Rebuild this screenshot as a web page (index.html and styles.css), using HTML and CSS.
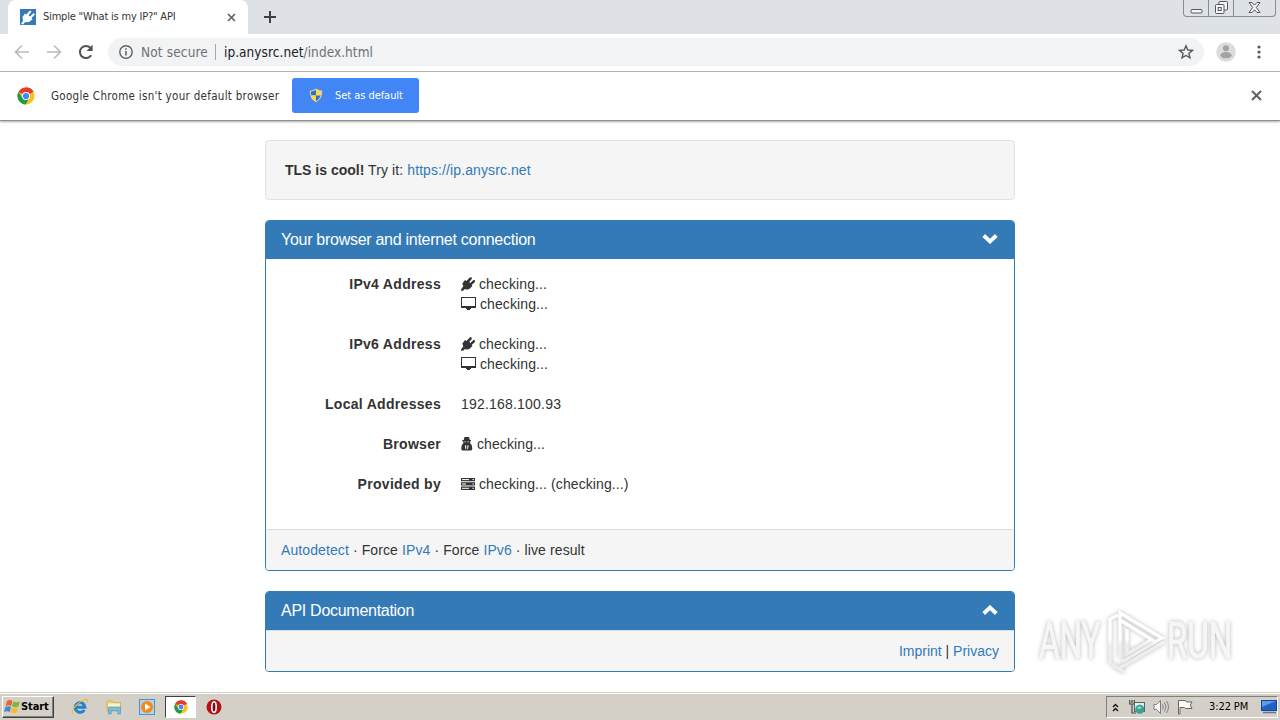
FILE: index.html
```html
<!DOCTYPE html>
<html lang="en">
<head>
  <meta charset="UTF-8">
  <meta name="viewport" content="width=device-width, initial-scale=1.0">
  <title>Simple "What is my IP?" API</title>
  <link rel="stylesheet" href="styles.css">
</head>
<body>
  <!-- shared icons -->
  <svg class="defs" width="0" height="0">
    <symbol id="plug" viewBox="0 0 14 14">
      <path d="M0 14 L.5 11.5 L2.3 9.5 L1.4 6.5 L4 3 L5.4 4 L9 .3 Q11 -.3 10.9 1.7 L8.2 5 L9.4 6 L12.5 3 Q14.6 2.8 13.9 5 L10.6 8 L11.5 9 L8 12.2 L4.8 12.5 L3.7 12 L2.5 13.4 Z"/>
    </symbol>
    <symbol id="monitor" viewBox="0 0 15 14">
      <path fill-rule="evenodd" d="M0 0H15V11H10V12H9V13H6V12H5V11H0Z M1 1V9H14V1Z"/>
    </symbol>
    <symbol id="chrome" viewBox="0 0 18 18">
      <circle cx="9" cy="9" r="8.5" fill="#fbc116"/>
      <path d="M9 9 L1.6 4.7 A8.5 8.5 0 0 1 16.4 4.7 Z" fill="#e33b2e"/>
      <path d="M1.6 4.7 A8.5 8.5 0 0 0 8.6 17.5 L12.4 10.9 L9 9 L5.5 11 Z" fill="#1e9a50"/>
      <path d="M9 5 H16.5 L16.4 4.7 A8.5 8.5 0 0 0 9 .5 Z" fill="#e33b2e"/>
      <circle cx="9" cy="9" r="4" fill="#fff"/>
      <circle cx="9" cy="9" r="3.1" fill="#4285f4"/>
    </symbol>
  </svg>

  <div class="tabstrip">
    <div class="tab">
      <svg class="favicon" width="16" height="16" viewBox="0 0 16 16">
        <rect width="16" height="16" fill="#337ab7"/>
        <path fill="#fff" d="M1 15 L3 12 L2.5 8 L5 4.5 L6.3 5.6 L10 1.5 L11.5 2.5 L8.6 6.3 L10 7.4 L13.5 4 L15 5.5 L11.5 9 L12.5 10.2 L9 13 L5 13.2 L3 15.5Z"/>
      </svg>
      <span class="tab-title">Simple "What is my IP?" API</span>
      <svg class="tab-close" width="9" height="9" viewBox="0 0 9 9"><path d="M1 1L8 8M8 1L1 8" stroke="#5f6368" stroke-width="1.7"/></svg>
    </div>
    <svg class="new-tab" width="12" height="12" viewBox="0 0 12 12"><path d="M6 0V12M0 6H12" stroke="#3c4043" stroke-width="2"/></svg>
    <div class="window-buttons">
      <span class="win-btn"><svg width="13" height="6" viewBox="0 0 13 6"><rect x="1" y="1.5" width="11" height="3.5" rx="1" fill="#f4f5f8" stroke="#53565f"/></svg></span>
      <span class="win-btn"><svg width="13" height="13" viewBox="0 0 13 13" fill="#f4f5f8" stroke="#53565f"><rect x="4" y=".5" width="8.5" height="8.5" rx="1"/><rect x=".5" y="3.5" width="8.5" height="9" rx="1"/><rect x="3.2" y="6.5" width="3" height="3"/></svg></span>
      <span class="win-btn wide"><svg width="13" height="11" viewBox="0 0 13 11"><path d="M1 .5H4L6.5 3.2L9 .5H12L8.3 5.5L12 10.5H9L6.5 7.8L4 10.5H1L4.7 5.5Z" fill="#f4f5f8" stroke="#53565f"/></svg></span>
    </div>
  </div>

  <div class="toolbar">
    <svg class="nav" width="16" height="16" viewBox="0 0 16 16"><path d="M15 8H2M8 1.5L1.5 8L8 14.5" fill="none" stroke="#b9bbbe" stroke-width="1.7"/></svg>
    <svg class="nav" width="16" height="16" viewBox="0 0 16 16"><path d="M1 8H14M8 1.5L14.5 8L8 14.5" fill="none" stroke="#b9bbbe" stroke-width="1.7"/></svg>
    <svg class="nav" width="16" height="16" viewBox="0 0 16 16"><path d="M13.2 11.3A6.1 6.1 0 1 1 12.5 3.8" fill="none" stroke="#505357" stroke-width="2"/><path d="M14.7 .8V7H8.5Z" fill="#505357"/></svg>
    <div class="omnibox">
      <svg width="14" height="14" viewBox="0 0 14 14"><circle cx="7" cy="7" r="6.2" fill="none" stroke="#5f6368" stroke-width="1.4"/><path d="M7 6V10.5M7 3.2V4.8" stroke="#5f6368" stroke-width="1.6"/></svg>
      <span class="not-secure">Not secure</span>
      <span class="omni-sep"></span>
      <span class="url"><b>ip.anysrc.net</b>/index.html</span>
      <svg class="star" width="16" height="16" viewBox="0 0 16 16"><path d="M8 1.8L9.8 6L14.4 6.4L10.9 9.4L12 13.9L8 11.5L4 13.9L5.1 9.4L1.6 6.4L6.2 6Z" fill="none" stroke="#55595e" stroke-width="1.4"/></svg>
    </div>
    <svg class="avatar" width="20" height="20" viewBox="0 0 20 20"><circle cx="10" cy="10" r="9.8" fill="#dcdcdc"/><circle cx="10" cy="6.3" r="3" fill="#a3a3a3"/><ellipse cx="10" cy="13.2" rx="5.6" ry="3.1" fill="#a3a3a3"/></svg>
    <svg class="menu" width="4" height="14" viewBox="0 0 4 14" fill="#55595e"><circle cx="2" cy="2" r="1.6"/><circle cx="2" cy="7" r="1.6"/><circle cx="2" cy="12" r="1.6"/></svg>
  </div>

  <div class="infobar">
    <svg width="18" height="18"><use href="#chrome"/></svg>
    <span class="info-text">Google Chrome isn't your default browser</span>
    <div class="default-btn">
      <svg width="14" height="15" viewBox="0 0 14 15">
        <path d="M7 .5Q4 2.5 .8 2.5Q.2 11 7 14.5Q13.8 11 13.2 2.5Q10 2.5 7 .5Z" fill="#dfe6ea" stroke="#8d8a6a" stroke-width=".6"/>
        <path d="M7 1.8Q4.5 3.3 1.9 3.5Q1.8 5.5 2.3 7.4H7Z" fill="#2c72c7"/>
        <path d="M7 1.8Q9.5 3.3 12.1 3.5Q12.2 5.5 11.7 7.4H7Z" fill="#ffd736"/>
        <path d="M2.3 7.4Q3.5 11.5 7 13.4V7.4Z" fill="#ffd736"/>
        <path d="M11.7 7.4Q10.5 11.5 7 13.4V7.4Z" fill="#2c72c7"/>
      </svg>
      <span>Set as default</span>
    </div>
    <svg class="info-close" width="11" height="11" viewBox="0 0 11 11"><path d="M1 1L10 10M10 1L1 10" stroke="#5f6368" stroke-width="2"/></svg>
  </div>

  <div class="page">
    <div class="well"><b>TLS is cool!</b> Try it: <a>https://ip.anysrc.net</a></div>

    <div class="panel">
      <div class="panel-heading">
        <span>Your browser and internet connection</span>
        <svg width="16" height="10" viewBox="0 0 16 10"><path d="M1.7 1.5L8 7.5L14.3 1.5" fill="none" stroke="#fff" stroke-width="3.8"/></svg>
      </div>
      <dl class="panel-body">
        <dt>IPv4 Address</dt>
        <dd>
          <div><svg width="14" height="14"><use href="#plug"/></svg>checking...</div>
          <div><svg width="15" height="14"><use href="#monitor"/></svg>checking...</div>
        </dd>
        <dt>IPv6 Address</dt>
        <dd>
          <div><svg width="14" height="14"><use href="#plug"/></svg>checking...</div>
          <div><svg width="15" height="14"><use href="#monitor"/></svg>checking...</div>
        </dd>
        <dt>Local Addresses</dt>
        <dd><div class="ip">192.168.100.93</div></dd>
        <dt>Browser</dt>
        <dd><div><svg width="12" height="14" viewBox="0 0 12 14"><path fill-rule="evenodd" d="M3.5 0H8L8.8 3H10V4.3H9.2V6.5L10.7 8L11.3 12Q11 13.5 9.5 13.5H2Q.5 13.5 .2 12L.8 8L2.3 6.5V4.3H1.3V3H2.7Z M3.4 4.5V5.2H5V4.5Z M6.4 4.5V5.2H8V4.5Z M3.8 8.2L4.5 12.3H5.2V8.5Z M7.7 8.2L7 12.3H6.3V8.5Z"/></svg>checking...</div></dd>
        <dt>Provided by</dt>
        <dd><div><svg width="14" height="14" viewBox="0 0 14 14"><path d="M0 1H14V4.3H0ZM0 5.3H14V8.6H0ZM0 9.6H14V13H0Z"/><path d="M1 2.6H8M1 7H5M1 11.3H8M11.5 2.6H13M11.5 7H13M11.5 11.3H13" stroke="#fff"/></svg>checking... (checking...)</div></dd>
      </dl>
      <div class="panel-footer"><a>Autodetect</a> · Force <a>IPv4</a> · Force <a>IPv6</a> · live result</div>
    </div>

    <div class="panel">
      <div class="panel-heading">
        <span>API Documentation</span>
        <svg width="16" height="10" viewBox="0 0 16 10"><path d="M1.7 8.5L8 2.5L14.3 8.5" fill="none" stroke="#fff" stroke-width="3.8"/></svg>
      </div>
      <div class="panel-footer right"><a>Imprint</a> | <a>Privacy</a></div>
    </div>
  </div>

  <div class="taskbar">
    <div class="start">
      <svg width="17" height="16" viewBox="0 0 17 16">
        <path d="M3 2Q6 0 8.3 2L7.2 7Q4.5 5.3 1.6 7Z" fill="#e8642b"/>
        <path d="M9.2 2.4Q12 4 15.8 2.4L14.4 7.5Q11 9 8 7.3Z" fill="#7eb83a"/>
        <path d="M1.4 8Q4.5 6.5 7 8L5.7 13Q3 11.4 0 13Z" fill="#3e8bd2"/>
        <path d="M7.8 8.4Q11 10 14.2 8.4L13 13.5Q9.5 15 6.5 13.4Z" fill="#f6bd2c"/>
      </svg>
      <span>Start</span>
    </div>
    <div class="quick">
      <svg width="18" height="18" viewBox="0 0 18 18">
        <path d="M13.3 12A4.9 4.9 0 1 1 14 9.3H5" fill="none" stroke="#2381d4" stroke-width="3"/>
        <path d="M2.2 15.8Q-.5 15 3 10Q8 3.6 14 1.5Q18 .5 15.8 5" fill="none" stroke="#e9bd36" stroke-width="1.2"/>
      </svg>
    </div>
    <div class="quick">
      <svg width="18" height="18" viewBox="0 0 18 18">
        <path d="M2 3H7L8.5 4.5H15.5V13H2Z" fill="#f0d477" stroke="#c7a646" stroke-width=".7"/>
        <path d="M3 5.5H15V10H3Z" fill="#fbf3bd"/>
        <path d="M3.5 9H15.5V16H12.8V12.5H6.2V16H3.5Z" fill="#77bde3" stroke="#4b94bd" stroke-width=".6"/>
      </svg>
    </div>
    <div class="quick">
      <svg width="18" height="18" viewBox="0 0 18 18">
        <rect x="1.5" y="1.5" width="15" height="15" fill="#b2d3ee" stroke="#4d91c9"/>
        <circle cx="9" cy="9" r="6" fill="#f18a1b"/>
        <path d="M7 5.5L12.5 9L7 12.5Z" fill="#fff"/>
      </svg>
    </div>
    <div class="quick active"><svg width="14" height="14"><use href="#chrome"/></svg></div>
    <div class="quick">
      <svg width="16" height="16" viewBox="0 0 16 16"><circle cx="8" cy="8" r="7.5" fill="#b51216"/><ellipse cx="8" cy="8" rx="2.2" ry="5.3" fill="#7c0d10" stroke="#fff" stroke-width="1.6"/></svg>
    </div>

    <div class="tray">
      <svg width="7" height="9" viewBox="0 0 7 9"><path d="M1 4L3.5 1.5L6 4M1 8L3.5 5.5L6 8" fill="none" stroke="#111" stroke-width="1.4"/></svg>
      <svg class="network" width="16" height="16" viewBox="0 0 16 16">
        <path d="M.7 1V5H5.3V1M3 1V4M3 5V14H7" fill="none" stroke="#4e4e4e" stroke-width="1.2"/>
        <rect x="5.5" y="3.5" width="10" height="9" fill="#d9eef0" stroke="#576467"/>
        <circle cx="10.8" cy="10.3" r="4.6" fill="#3aa394"/>
        <path d="M8 9Q10 6.5 13 8.5Q11 11 8 9Z" fill="#9ad7d5"/>
      </svg>
      <svg class="sound" width="17" height="16" viewBox="0 0 17 16"><path d="M1 5.5H3.5L7.5 1.5V14.5L3.5 10.5H1Z" fill="#fafafa" stroke="#7c7c7c"/><path d="M9.5 5.5Q11 8 9.5 10.5M11.5 3.5Q14.3 8 11.5 12.5M13.6 2Q17.4 8 13.6 14" fill="none" stroke="#868686"/></svg>
      <svg class="flag" width="16" height="16" viewBox="0 0 16 16"><path d="M1.5 15V1.5H8.5L9.5 3H15L13.3 6L15 9.5H8.7L7.5 8.5H3V15Z" fill="#fafafa" stroke="#666"/></svg>
      <span class="clock">3:22 PM</span>
      <svg class="desktop" width="16" height="14" viewBox="0 0 16 14"><rect x=".5" y=".5" width="15" height="10" fill="#2061c4" stroke="#164591"/><path d="M1 1H15L1 7Z" fill="#5b9be7"/><path d="M2 12.5H15" stroke="#64758a" stroke-width="1.5"/></svg>
    </div>
  </div>

  <svg class="watermark" width="204" height="76" viewBox="0 0 204 76">
    <defs>
      <linearGradient id="fade" gradientUnits="userSpaceOnUse" x1="0" y1="6" x2="0" y2="70">
        <stop offset=".45" stop-color="#fff"/>
        <stop offset=".55" stop-color="#eee"/>
      </linearGradient>
    </defs>
    <text transform="translate(5 54) scale(.63 1)">ANY</text>
    <text transform="translate(133 54) scale(.66 1)">RUN</text>
    <path d="M76 60V15L84 11M86 53V9L128 34L88 58M86 16L123 39M93 25V50L117 36M84 65L130 38M80 59V62L90 68"/>
  </svg>
</body>
</html>
```
FILE: styles.css
```css
body {
  margin: 0;
  height: 720px;
  display: flex;
  flex-direction: column;
  overflow: hidden;
  background: #fff;
  color: #333;
  font-family: "Liberation Sans", Arial, sans-serif;
  font-size: 14px;
  line-height: 20px;
}

svg {
  display: block;
  flex: none;
}

.defs {
  position: absolute;
}

a {
  color: #337ab7;
}

/* Browser chrome */
.tabstrip {
  display: flex;
  align-items: center;
  height: 34px;
  flex: none;
  background: #dee1e6;
  padding-left: 8px;
}

.tab {
  display: flex;
  align-items: center;
  box-sizing: border-box;
  width: 240px;
  height: 34px;
  padding: 0 12px;
  background: #fff;
  border-radius: 8px 8px 0 0;
}

.tab-title {
  margin-left: 7px;
  color: #333;
  font: 11px/16px "DejaVu Sans Condensed", "DejaVu Sans", sans-serif;
  letter-spacing: -0.2px;
  white-space: nowrap;
}

.tab-close {
  margin-left: auto;
}

.new-tab {
  margin-left: 16px;
}

.window-buttons {
  display: flex;
  align-self: flex-start;
  box-sizing: border-box;
  height: 17px;
  margin-left: auto;
  margin-right: 4px;
  border: 1px solid #878b95;
  border-top: 0;
  border-radius: 0 0 4px 4px;
}

.win-btn {
  display: flex;
  justify-content: center;
  align-items: flex-end;
  box-sizing: border-box;
  width: 25px;
  height: 16px;
  padding-bottom: 2px;
  border-right: 1px solid #878b95;
}

.win-btn.wide {
  width: 41px;
  padding-bottom: 3px;
  border: 0;
}

.toolbar {
  display: flex;
  align-items: center;
  box-sizing: border-box;
  height: 38px;
  flex: none;
  padding: 0 19px 2px 14px;
  border-bottom: 1px solid #b4b4b6;
}

.nav {
  margin-right: 16px;
}

.omnibox {
  display: flex;
  align-items: center;
  box-sizing: border-box;
  flex: 1;
  height: 28px;
  margin-left: -2px;
  padding: 0 10px 0 11px;
  border-radius: 14px;
  background: #f1f3f4;
  font-family: "DejaVu Sans Condensed", "DejaVu Sans", sans-serif;
  color: #6e7277;
  white-space: nowrap;
}

.not-secure {
  margin-left: 8px;
  font-size: 13.5px;
  letter-spacing: 0.15px;
}

.omni-sep {
  width: 1px;
  height: 16px;
  margin: 0 8px 0 7px;
  background: #a3a6aa;
}

.url {
  font-size: 13.5px;
  letter-spacing: 0.06px;
}

.url b {
  font-weight: normal;
  color: #202124;
}

.star {
  margin-left: auto;
}

.avatar {
  margin-left: 12px;
}

.menu {
  margin-left: 21px;
}

.infobar {
  display: flex;
  align-items: center;
  box-sizing: border-box;
  height: 49px;
  flex: none;
  padding: 0 18px 1px 17px;
  border-bottom: 1px solid #8e8e8e;
  box-shadow: 0 1px 2px #aaa;
  font-family: "DejaVu Sans Condensed", "DejaVu Sans", sans-serif;
}

.info-text {
  margin-left: 16px;
  width: 241px;
  font-size: 11.5px;
  letter-spacing: 0.3px;
  white-space: nowrap;
}

.default-btn {
  display: flex;
  align-items: center;
  box-sizing: border-box;
  width: 127px;
  height: 35px;
  padding-left: 17px;
  border-radius: 3px;
  background: #4285f4;
  color: #fff;
  font-size: 11px;
  letter-spacing: -0.05px;
  white-space: nowrap;
}

.default-btn span {
  margin-left: 12px;
}

.info-close {
  margin-left: auto;
}

/* Page content */
.page {
  box-sizing: border-box;
  width: 750px;
  flex: 1;
  margin: 0 auto;
  padding-top: 19px;
  letter-spacing: 0.1px;
}

.well {
  box-sizing: border-box;
  height: 60px;
  margin-bottom: 20px;
  padding: 19px;
  border: 1px solid #e3e3e3;
  border-radius: 4px;
  background: #f5f5f5;
}

.well b {
  letter-spacing: 0;
}

.panel {
  box-sizing: border-box;
  margin-bottom: 20px;
  border: 1px solid #337ab7;
  border-radius: 4px;
  overflow: hidden;
}

.panel-heading {
  display: flex;
  align-items: center;
  justify-content: space-between;
  height: 38px;
  padding: 0 16px 0 15px;
  background: #337ab7;
  color: #fff;
  font-size: 16px;
  letter-spacing: -0.28px;
}

.panel-heading svg {
  margin-bottom: 2px;
}

.panel-body {
  display: grid;
  grid-template-columns: 160px 1fr;
  gap: 20px;
  margin: 0;
  padding: 15px 15px 35px;
}

dt {
  text-align: right;
  font-weight: bold;
  letter-spacing: 0.3px;
}

dd {
  margin: 0;
}

dd div {
  display: flex;
  align-items: center;
}

dd svg {
  margin-right: 4px;
  fill: #333;
}

.ip {
  letter-spacing: 0.2px;
}

.panel-footer {
  padding: 10px 15px;
  border-top: 1px solid #ddd;
  background: #f5f5f5;
}

.right {
  text-align: right;
  letter-spacing: 0;
}

/* Desktop taskbar */
.taskbar {
  display: flex;
  align-items: center;
  box-sizing: border-box;
  height: 28px;
  flex: none;
  padding: 1px 2px 0;
  border-top: 1px solid #d4d0c8;
  box-shadow: inset 0 1px #fff;
  background: #d4d0c8;
  color: #000;
}

.start {
  display: flex;
  align-items: center;
  box-sizing: border-box;
  width: 52px;
  height: 22px;
  margin-right: 10.5px;
  padding-left: 1px;
  border: 1px solid;
  border-color: #fff #404040 #404040 #fff;
  box-shadow: inset -1px -1px #808080;
  font: bold 11px/16px "DejaVu Sans Condensed", "DejaVu Sans", sans-serif;
  letter-spacing: -0.1px;
}

.quick {
  display: flex;
  align-items: center;
  justify-content: center;
  box-sizing: border-box;
  width: 31px;
  height: 22px;
  margin-right: 2.5px;
}

.active {
  border: 1px solid;
  border-color: #404040 #fff #fff #404040;
  background: #fff;
}

.tray {
  display: flex;
  align-items: center;
  box-sizing: border-box;
  width: 172px;
  height: 22px;
  margin-left: auto;
  padding-left: 5px;
  border: 1px solid;
  border-color: #808080 #fff #fff #808080;
}

.network {
  margin-left: 10px;
}

.sound {
  margin-left: 8px;
}

.flag {
  margin-left: 7px;
}

.clock {
  width: 52px;
  margin-left: 16px;
  font: 11px/16px "DejaVu Sans Condensed", "DejaVu Sans", sans-serif;
  letter-spacing: -0.1px;
  white-space: nowrap;
}

.watermark {
  position: absolute;
  left: 1034px;
  top: 604px;
  filter: drop-shadow(0 0 2px rgba(0, 0, 0, 0.28));
}

.watermark text {
  fill: #f6f6f6;
  stroke: #f6f6f6;
  font: 50px Roboto, sans-serif;
}

.watermark path {
  fill: none;
  stroke: url(#fade);
  stroke-width: 3.4;
}
```
